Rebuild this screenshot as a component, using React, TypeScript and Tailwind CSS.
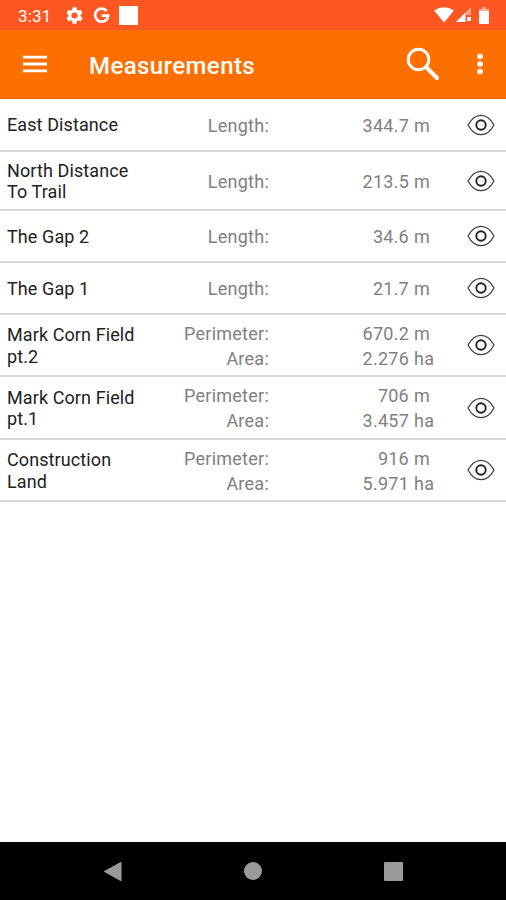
import clsx from "clsx";

interface Detail {
  label: string;
  value: string;
  unit: string;
}

interface Measurement {
  name: string[];
  details: Detail[];
  height: string;
}

const length = (value: string): Detail[] => [{ label: "Length:", value, unit: "m" }];

const field = (perimeter: string, area: string): Detail[] => [
  { label: "Perimeter:", value: perimeter, unit: "m" },
  { label: "Area:", value: area, unit: "ha" },
];

const measurements: Measurement[] = [
  { name: ["East Distance"], details: length("344.7"), height: "h-[53px]" },
  { name: ["North Distance", "To Trail"], details: length("213.5"), height: "h-[59px]" },
  { name: ["The Gap 2"], details: length("34.6"), height: "h-[52px]" },
  { name: ["The Gap 1"], details: length("21.7"), height: "h-[52px]" },
  { name: ["Mark Corn Field", "pt.2"], details: field("670.2", "2.276"), height: "h-[62px]" },
  { name: ["Mark Corn Field", "pt.1"], details: field("706", "3.457"), height: "h-[63px]" },
  { name: ["Construction", "Land"], details: field("916", "5.971"), height: "h-[62px]" },
];

function EyeIcon() {
  return (
    <svg width="28" height="22" viewBox="0 0 28 22" fill="none" stroke="#3a3a3a">
      <path
        d="M1 11C4.5 4.500 9 1.300 14 1.300S23.500 4.500 27 11C23.500 17.500 19 20.700 14 20.700S4.500 17.500 1 11Z"
        strokeWidth="1.2"
        strokeLinejoin="round"
      />
      <circle cx="14" cy="11" r="4.700" stroke="#222" strokeWidth="1.900" />
    </svg>
  );
}

function StatusBar() {
  return (
    <div className="flex h-[30px] items-center bg-[#ff5722] pr-[17px] pl-[18px] text-white">
      <span className="w-[48px] pt-px text-[17px] leading-[30px] tracking-[0.15px]">3:31</span>
      <svg width="17" height="17" viewBox="2 2 20 20" fill="currentColor">
        <path d="M19.140 12.940c.04-.3.060-.610.060-.940s-.020-.640-.070-.940l2.030-1.580a.49.49 0 0 0 .120-.610l-1.920-3.320a.49.49 0 0 0-.590-.220l-2.390.960a7 7 0 0 0-1.620-.940l-.360-2.540a.48.48 0 0 0-.480-.410h-3.840a.48.48 0 0 0-.470.410l-.360 2.540a7.300 7.300 0 0 0-1.620.940l-2.390-.960a.48.48 0 0 0-.590.220L2.740 8.870a.48.48 0 0 0 .120.610l2.030 1.580a6 6 0 0 0 0 1.880l-2.030 1.580a.49.49 0 0 0-.120.610l1.920 3.320c.12.220.37.290.59.220l2.390-.960c.5.380 1.030.7 1.620.940l.36 2.540c.05.240.24.410.48.410h3.840c.24 0 .44-.170.47-.410l.36-2.540a7.300 7.300 0 0 0 1.620-.940l2.390.960c.22.080.47 0 .59-.220l1.920-3.320a.48.48 0 0 0-.120-.610zM12 15.600A3.600 3.600 0 1 1 12 8.400a3.600 3.600 0 0 1 0 7.200" />
      </svg>
      <svg className="ml-[10px]" width="17" height="17" viewBox="0 0 17 17" fill="none">
        <path
          d="M13.600 4A6.500 6.500 0 1 0 15.100 8.600H8.700"
          stroke="currentColor"
          strokeWidth="2.800"
        />
      </svg>
      <div className="mt-px ml-[9px] size-[19px] bg-white" />
      <div className="ml-auto flex items-center">
        <svg width="20" height="16" viewBox="0 0 20 16" fill="currentColor">
          <path d="M0 3.500Q10-3 20 3.500L10 15.500Z" />
        </svg>
        <svg className="ml-[2px]" width="15" height="16" viewBox="0 0 15 16" fill="currentColor">
          <path d="M15 0V8H10V15H0Z" fillOpacity="0.45" />
          <path d="M9 6V15H0Z" />
          <path d="M11 10h4v4h-4z" />
        </svg>
        <svg className="ml-[8px]" width="10" height="17" viewBox="0 0 10 17" fill="currentColor">
          <path d="M3 0h4v2h3v3H0V2h3z" fillOpacity="0.5" />
          <path d="M0 4h10v12a1 1 0 0 1-1 1H1a1 1 0 0 1-1-1z" />
        </svg>
      </div>
    </div>
  );
}

function AppBar() {
  return (
    <header className="flex h-[69px] items-center border-b border-[#f2600a] bg-[#ff6f00] pr-[23px] pl-[23px] text-white">
      <svg width="24" height="18" viewBox="0 0 24 18" fill="currentColor">
        <path d="M0 .8h24v2.800H0zM0 7.600h24v2.800H0zM0 14.400h24v2.800H0z" />
      </svg>
      <h1 className="mt-[4px] ml-[42px] text-[24px] leading-7 font-medium tracking-[0.42px]">
        Measurements
      </h1>
      <svg
        className="ml-auto"
        width="34"
        height="34"
        viewBox="0 0 34 34"
        fill="none"
        stroke="currentColor"
        strokeLinecap="round"
      >
        <circle cx="12.500" cy="12.500" r="10.300" strokeWidth="3" />
        <path d="M20 20L31 31" strokeWidth="4" />
      </svg>
      <svg className="ml-[37px]" width="6" height="22" viewBox="0 0 6 22" fill="currentColor">
        <circle cx="3" cy="3.500" r="2.800" />
        <circle cx="3" cy="11" r="2.800" />
        <circle cx="3" cy="18.500" r="2.800" />
      </svg>
    </header>
  );
}

function MeasurementRow({ name, details, height }: Measurement) {
  return (
    <li
      className={clsx(
        "flex items-center border-b-2 border-[#dadada] pl-[7px] text-[18px]",
        height,
      )}
    >
      <div className="w-[150px] pt-px leading-[21.5px] tracking-[0.1px] text-[#212121]">
        {name.map((line) => (
          <p key={line}>{line}</p>
        ))}
      </div>
      <div className="pt-px leading-[25px] tracking-[0.25px] text-[#808080]">
        {details.map(({ label, value, unit }) => (
          <div key={label} className="flex">
            <span className="w-[112px] text-right">{label}</span>
            <span className="w-[140px] text-right">{value}</span>
            <span className="w-[51px] pl-[5px]">{unit}</span>
          </div>
        ))}
      </div>
      <div className="ml-[7px]">
        <EyeIcon />
      </div>
    </li>
  );
}

function NavigationBar() {
  return (
    <nav className="flex h-[58px] items-center justify-between bg-black pr-[103px] pl-[103px] text-[#9a9a9a]">
      <svg width="19" height="21" viewBox="0 0 19 21" fill="currentColor">
        <path d="M18.500.5v20L.5 10.500Z" />
      </svg>
      <div className="size-[18px] rounded-full bg-[#9a9a9a]" />
      <div className="size-[19px] rounded-[1px] bg-[#9a9a9a]" />
    </nav>
  );
}

export default function App() {
  return (
    <div className="flex h-screen flex-col bg-white font-['Roboto',sans-serif]">
      <StatusBar />
      <AppBar />
      <ul className="flex-1">
        {measurements.map((measurement) => (
          <MeasurementRow key={measurement.name.join(" ")} {...measurement} />
        ))}
      </ul>
      <NavigationBar />
    </div>
  );
}
